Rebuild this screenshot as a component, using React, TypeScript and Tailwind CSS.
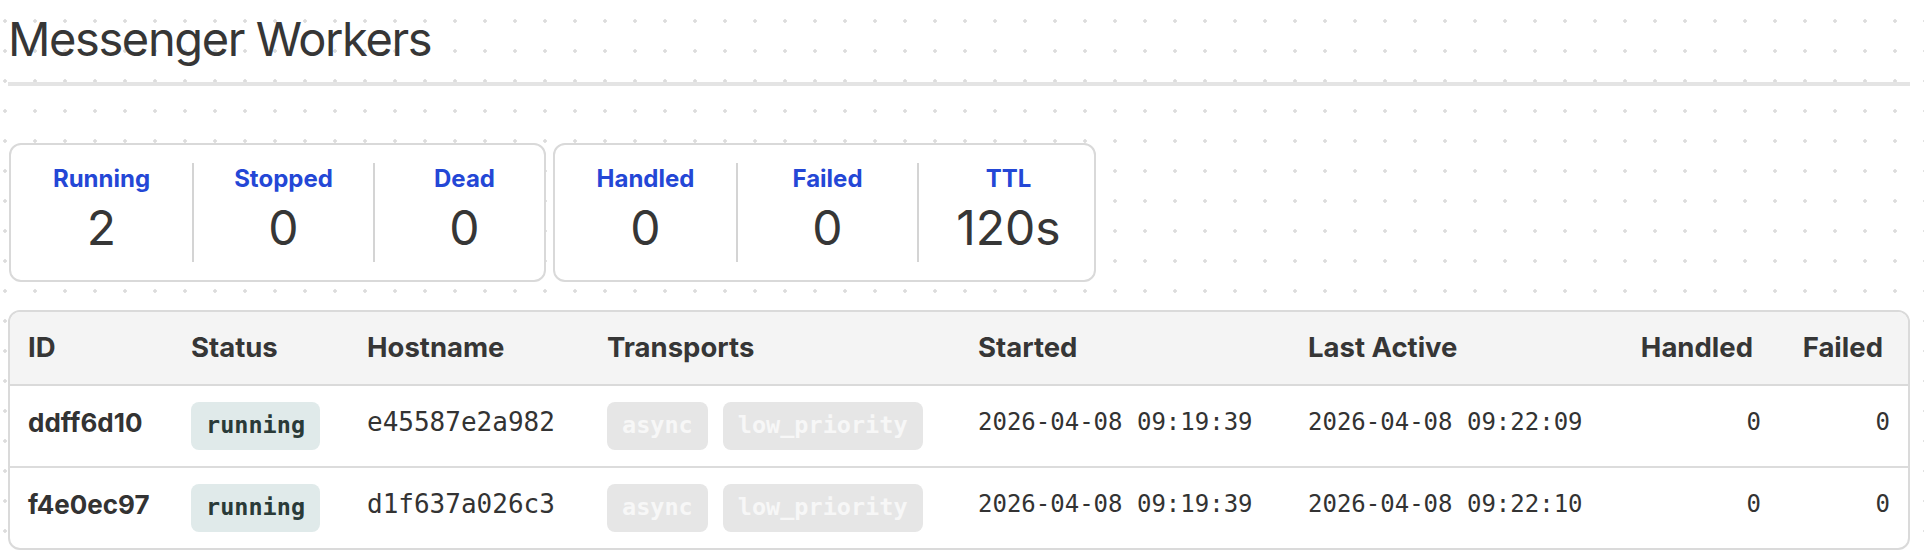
const summary = [
  { label: "Running", value: "2" },
  { label: "Stopped", value: "0" },
  { label: "Dead", value: "0" },
];

const throughput = [
  { label: "Handled", value: "0" },
  { label: "Failed", value: "0" },
  { label: "TTL", value: "120s" },
];

const workers = [
  {
    id: "ddff6d10",
    status: "running",
    hostname: "e45587e2a982",
    transports: ["async", "low_priority"],
    started: "2026-04-08 09:19:39",
    lastActive: "2026-04-08 09:22:09",
    handled: 0,
    failed: 0,
  },
  {
    id: "f4e0ec97",
    status: "running",
    hostname: "d1f637a026c3",
    transports: ["async", "low_priority"],
    started: "2026-04-08 09:19:39",
    lastActive: "2026-04-08 09:22:10",
    handled: 0,
    failed: 0,
  },
];

type Stat = { label: string; value: string };

function StatCard({ items, className = "" }: { items: Stat[]; className?: string }) {
  return (
    <div className={`flex rounded-[12px] border-2 border-[#d9d9d9] bg-white py-[18px] ${className}`}>
      {items.map((s, i) => (
        <div
          key={s.label}
          className={`flex h-[99px] w-[181px] shrink-0 flex-col items-center pt-[2px] ${
            i > 0 ? "border-l-2 border-[#d4d4d4]" : ""
          }`}
        >
          <div className="text-[24px] leading-[28px] font-bold text-[#2447d6]">{s.label}</div>
          <div className="mt-[11px] text-[48px] leading-[48px] text-[#363636]">{s.value}</div>
        </div>
      ))}
    </div>
  );
}

const mono = "font-['DejaVu_Sans_Mono',monospace]";

export default function App() {
  return (
    <div className="min-h-screen bg-white bg-[radial-gradient(circle,#dcdcdc_1.5px,transparent_2px)] bg-[length:30px_30px] bg-[position:-10px_6px] font-['Inter','Noto_Sans',sans-serif] text-[#3a3a3a]">
      <div className="pl-[8px] pr-[14px] pt-[11px] pb-4">
        {/* Header */}
        <h1 className="text-[47px] leading-[56px] font-normal tracking-[-1.4px] text-[#363636]">Messenger Workers</h1>
        <div className="mt-[15px] h-[4px] bg-[#e4e4e4]" />

        {/* Stats */}
        <div className="mt-[57px] flex">
          <StatCard items={summary} className="ml-px w-[537px]" />
          <StatCard items={throughput} className="ml-[7px] w-[543px]" />
        </div>

        {/* Workers table */}
        <div className="mt-[28px] overflow-hidden rounded-[12px] border-2 border-[#dadada] bg-white">
          <table className="w-full table-fixed border-separate border-spacing-0">
            <colgroup>
              <col className="w-[163px]" />
              <col className="w-[176px]" />
              <col className="w-[240px]" />
              <col className="w-[371px]" />
              <col className="w-[330px]" />
              <col className="w-[330px]" />
              <col className="w-[159px]" />
              <col className="w-[129px]" />
            </colgroup>
            <thead>
              <tr className="bg-[#f4f4f4] text-[27.5px] font-bold text-[#363636]">
                <th className="h-[74px] border-b-2 border-[#dadada] pl-[18px] text-left align-middle">ID</th>
                <th className="h-[74px] border-b-2 border-[#dadada] pl-[18px] text-left align-middle">Status</th>
                <th className="h-[74px] border-b-2 border-[#dadada] pl-[18px] text-left align-middle">Hostname</th>
                <th className="h-[74px] border-b-2 border-[#dadada] pl-[18px] text-left align-middle">Transports</th>
                <th className="h-[74px] border-b-2 border-[#dadada] pl-[18px] text-left align-middle">Started</th>
                <th className="h-[74px] border-b-2 border-[#dadada] pl-[18px] text-left align-middle">Last Active</th>
                <th className="h-[74px] border-b-2 border-[#dadada] pr-[26px] text-right align-middle">Handled</th>
                <th className="h-[74px] border-b-2 border-[#dadada] pr-[25px] text-right align-middle">Failed</th>
              </tr>
            </thead>
            <tbody className="text-[#333333]">
              {workers.map((w, idx) => {
                const last = idx === workers.length - 1;
                const cell = last ? "h-[80px] align-middle" : "h-[82px] border-b-2 border-[#dcdcdc] align-middle";
                return (
                  <tr key={w.id}>
                    <td className={`${cell} pl-[18px] pb-[8px] text-[26px] font-bold`}>{w.id}</td>
                    <td className={`${cell} pl-[18px]`}>
                      <span
                        className={`${mono} inline-flex h-[48px] items-center rounded-[8px] bg-[#e0eaea] px-[15px] text-[23.5px] font-bold text-[#2a3a38]`}
                      >
                        {w.status}
                      </span>
                    </td>
                    <td className={`${cell} ${mono} pl-[18px] pb-[8px] text-[26px]`}>{w.hostname}</td>
                    <td className={`${cell} pl-[18px]`}>
                      <div className="flex gap-[15px]">
                        {w.transports.map((t) => (
                          <span
                            key={t}
                            className={`${mono} inline-flex h-[48px] items-center rounded-[8px] bg-[#e6e6e6] px-[15px] text-[23.5px] font-bold text-[#f7f7f7]`}
                          >
                            {t}
                          </span>
                        ))}
                      </div>
                    </td>
                    <td className={`${cell} ${mono} pl-[18px] pb-[8px] text-[24px]`}>{w.started}</td>
                    <td className={`${cell} ${mono} pl-[18px] pb-[8px] text-[24px]`}>{w.lastActive}</td>
                    <td className={`${cell} ${mono} pr-[18px] pb-[8px] text-right text-[24px]`}>{w.handled}</td>
                    <td className={`${cell} ${mono} pr-[18px] pb-[8px] text-right text-[24px]`}>{w.failed}</td>
                  </tr>
                );
              })}
            </tbody>
          </table>
        </div>
      </div>
    </div>
  );
}
